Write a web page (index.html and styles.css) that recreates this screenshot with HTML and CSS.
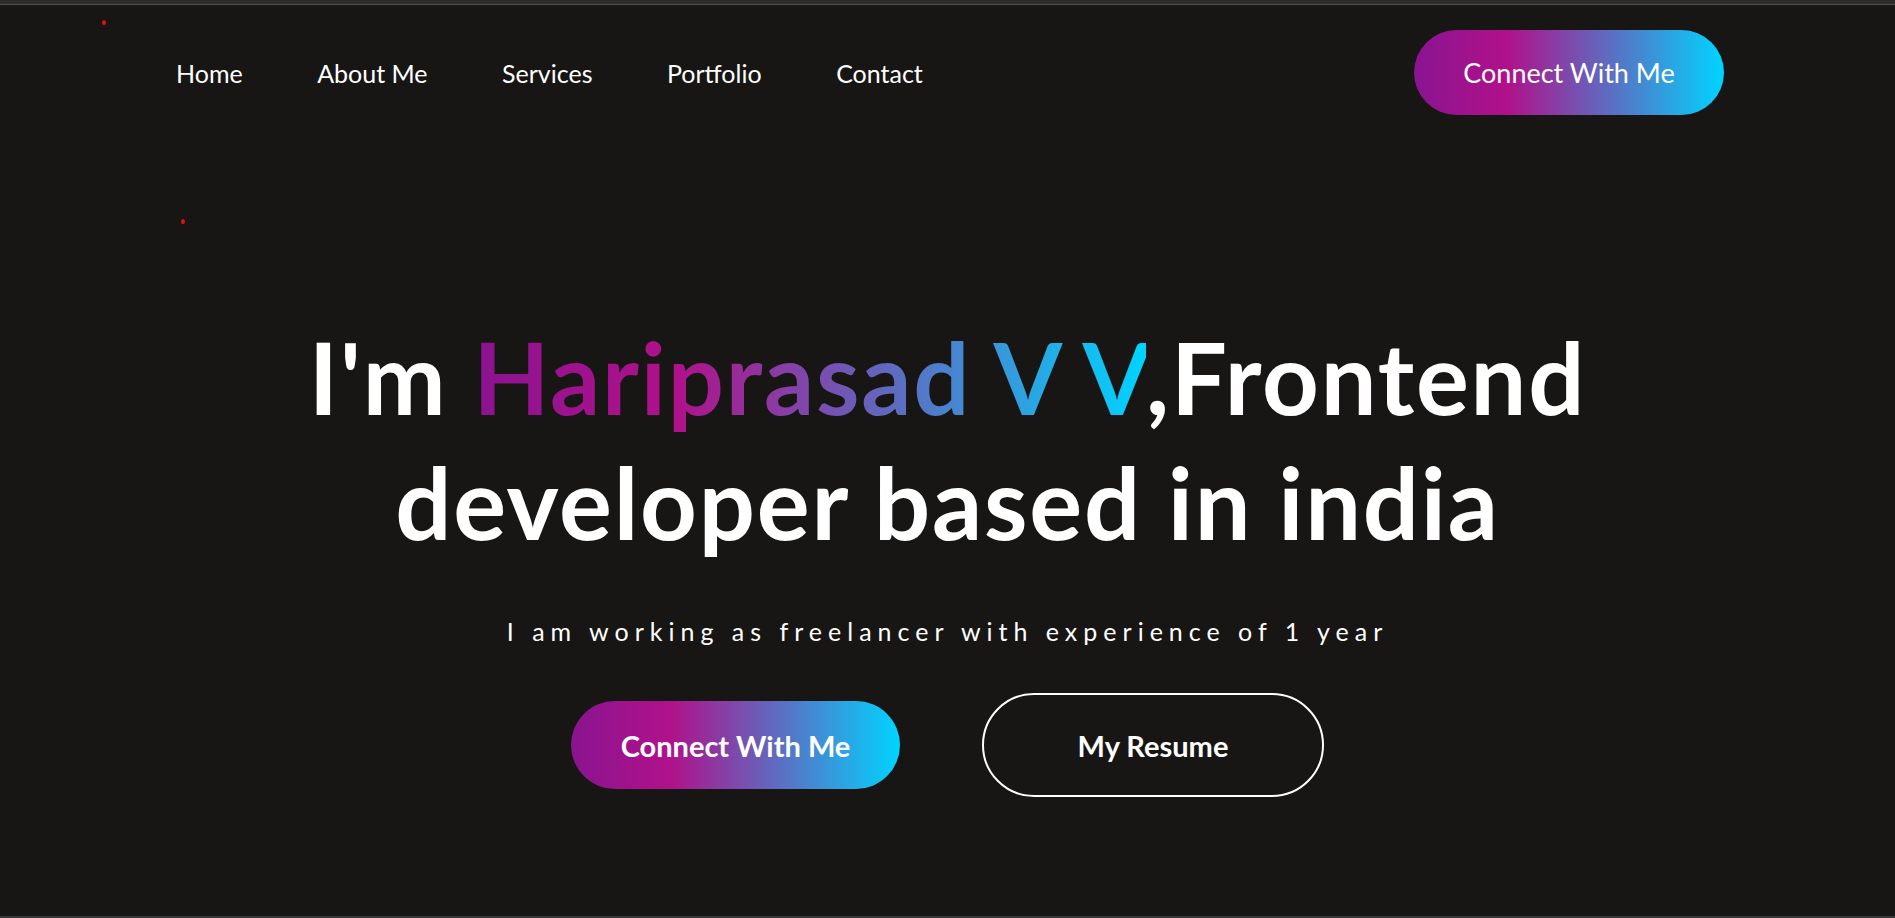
FILE: index.html
```html
<!DOCTYPE html>
<html lang="en">
<head>
<meta charset="utf-8">
<title>Hariprasad V V</title>
<link rel="stylesheet" href="styles.css">
</head>
<body>
<div class="page">
  <span class="dot dot-a"></span>
  <span class="dot dot-b"></span>
  <header class="nav">
    <ul class="nav-menu">
      <li>Home</li>
      <li>About Me</li>
      <li>Services</li>
      <li>Portfolio</li>
      <li>Contact</li>
    </ul>
    <a class="nav-connect">Connect With Me</a>
  </header>
  <section class="hero">
    <h1 class="hero-title">I'm <span class="grad-text">Hariprasad V V</span>,Frontend<br>developer based in india</h1>
    <p class="hero-sub">I am working as freelancer with experience of 1 year</p>
    <div class="hero-actions">
      <a class="btn btn-grad">Connect With Me</a>
      <a class="btn btn-outline">My Resume</a>
    </div>
  </section>
</div>
</body>
</html>
```
FILE: styles.css
```css
* { box-sizing: border-box; }
html, body { margin: 0; padding: 0; }
body {
  background: #171614;
  color: #ffffff;
  font-family: "Lato", "Noto Sans", sans-serif;
}
.page {
  position: relative;
  height: 100vh;
  border-top: 4px solid #2d2d2d;
  border-bottom: 2px solid #3a3a3a;
  box-shadow: inset 0 1px 0 #505050;
  overflow: hidden;
}
.dot {
  position: absolute;
  width: 4px;
  height: 5px;
  border-radius: 50%;
  background: #e3120f;
}
.dot-a { left: 102px; top: 16px; }
.dot-b { left: 181px; top: 215px; }

.nav {
  display: flex;
  align-items: center;
  justify-content: space-between;
  padding: 26px 171px 0 176px;
}
.nav-menu {
  display: flex;
  gap: 74.5px;
  list-style: none;
  margin: 0;
  padding: 0;
  font-size: 25px;
  font-weight: 400;
}
.nav-connect {
  display: flex;
  align-items: center;
  justify-content: center;
  width: 310px;
  height: 85px;
  border-radius: 50px;
  font-size: 27px;
  font-weight: 400;
  background: linear-gradient(90deg, #8a1490 0%, #b0118a 30%, #00d4ff 100%);
}

.hero {
  display: flex;
  flex-direction: column;
  align-items: center;
  margin-top: 199px;
  text-align: center;
}
.hero-title {
  margin: 0;
  font-size: 99px;
  line-height: 125px;
  font-weight: 700;
  letter-spacing: 1.8px;
}
.grad-text {
  background: linear-gradient(90deg, #8a1490 0%, #b0118a 30%, #00d4ff 100%);
  -webkit-background-clip: text;
  background-clip: text;
  color: transparent;
}
.hero-sub {
  margin: 52px 0 0;
  font-size: 25px;
  line-height: 30px;
  letter-spacing: 6px;
}
.hero-actions {
  display: flex;
  align-items: center;
  gap: 82px;
  margin-top: 47px;
}
.btn {
  display: flex;
  align-items: center;
  justify-content: center;
  border-radius: 60px;
  font-size: 29px;
  font-weight: 700;
}
.btn-grad {
  width: 329px;
  height: 88px;
  background: linear-gradient(90deg, #8a1490 0%, #b0118a 30%, #00d4ff 100%);
}
.btn-outline {
  width: 342px;
  height: 104px;
  border: 2px solid #ffffff;
}
```
